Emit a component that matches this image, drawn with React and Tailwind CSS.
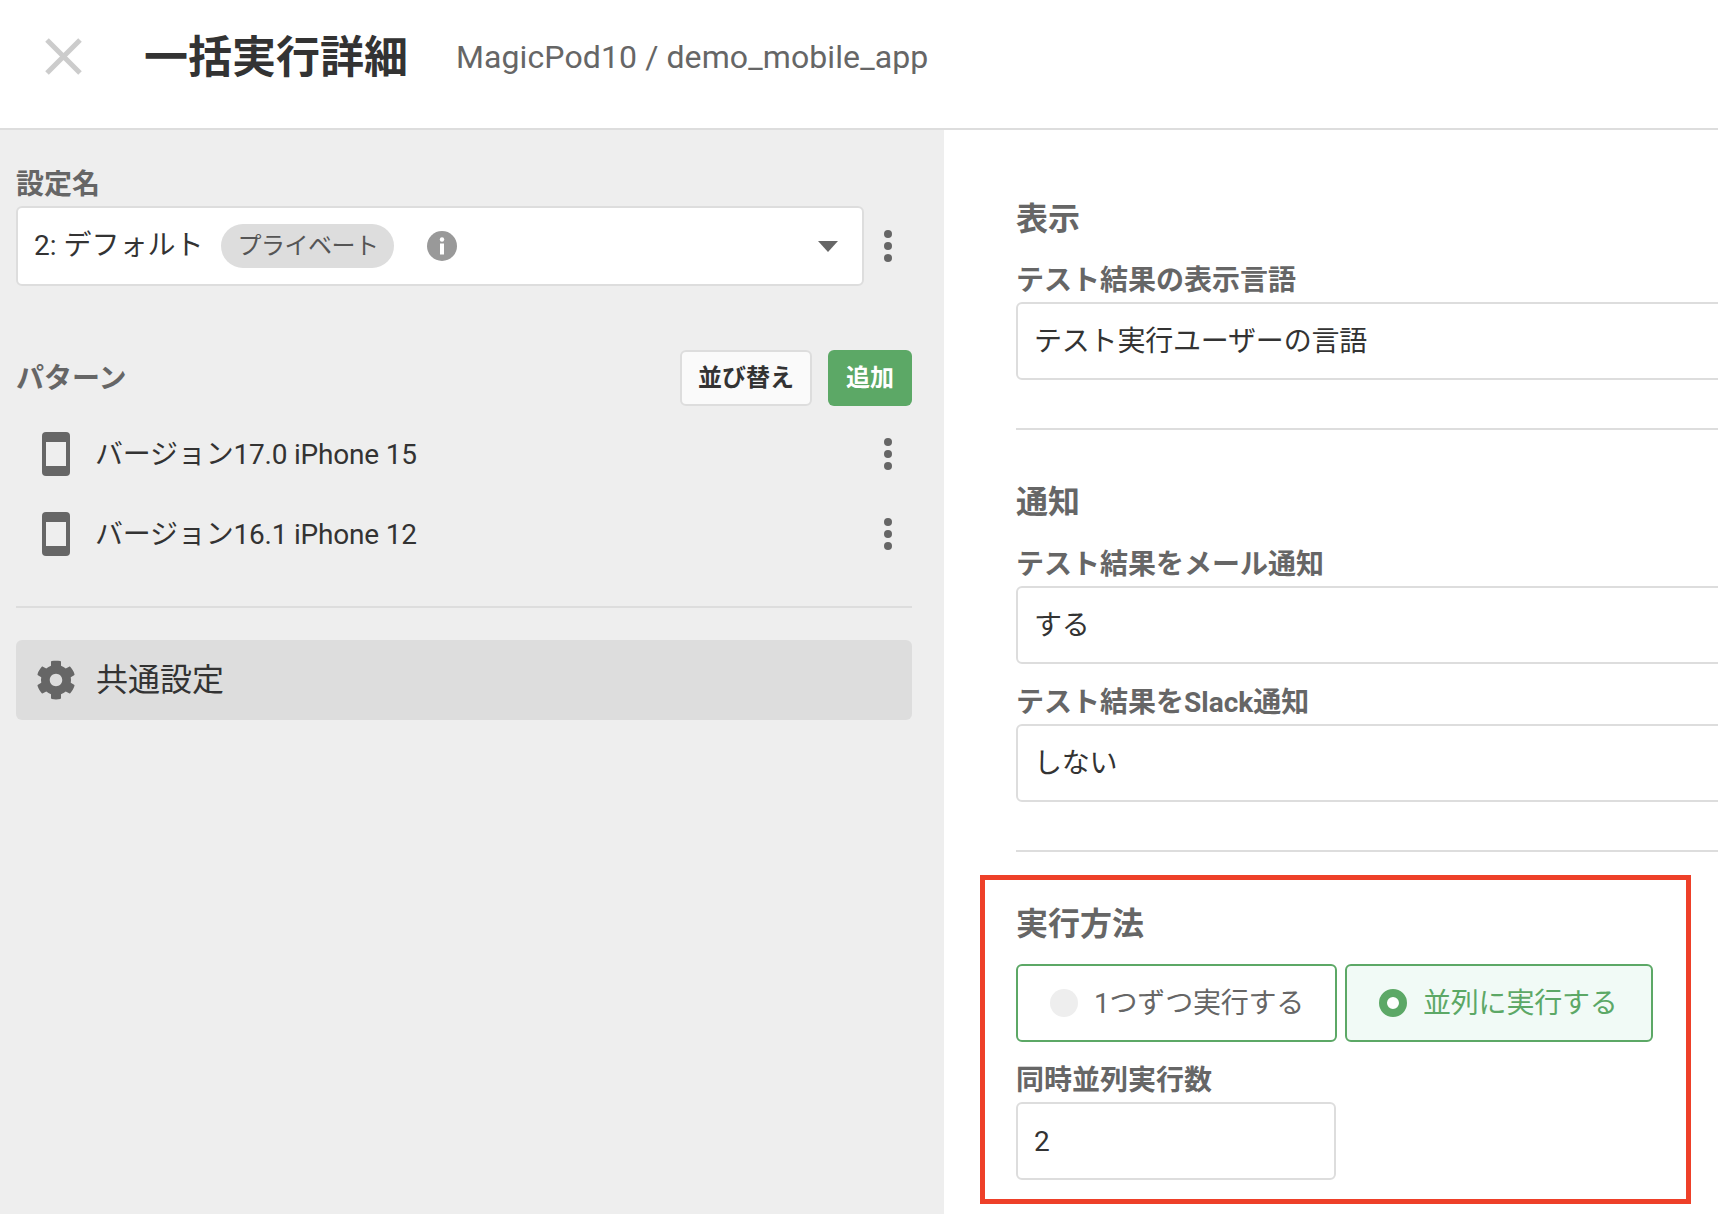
import { FaCog } from "react-icons/fa";

const font = { fontFamily: '"Roboto", "Noto Sans CJK JP", sans-serif' };

function Kebab() {
  return (
    <svg width="8" height="32" viewBox="0 0 8 32" className="shrink-0 fill-[#666]">
      <circle cx="4" cy="4" r="4" />
      <circle cx="4" cy="16" r="4" />
      <circle cx="4" cy="28" r="4" />
    </svg>
  );
}

function Phone() {
  return (
    <svg width="28" height="44" viewBox="0 0 28 44" className="shrink-0">
      <rect width="28" height="44" rx="4" fill="#666" />
      <rect x="4" y="10" width="20" height="24" fill="#eee" />
    </svg>
  );
}

function PatternRow({ label }) {
  return (
    <div className="flex items-center h-[80px] pl-[26px] pr-[20px]">
      <Phone />
      <span className="ml-[25px] pt-[2px] text-[28px] text-[#333] leading-none tracking-[-0.2px]">{label}</span>
      <div className="ml-auto flex"><Kebab /></div>
    </div>
  );
}

function Field({ label, value, className = "mt-[10px]" }) {
  return (
    <div className={className}>
      <div className="text-[28px] font-bold text-[#666] leading-[24px] h-[24px]">{label}</div>
      <div className="mt-[9px] h-[78px] w-[1000px] flex items-center px-[16px] pt-[2px] border-2 border-[#ddd] rounded-[6px] bg-white text-[28px] text-[#333] tracking-[-0.2px]">
        {value}
      </div>
    </div>
  );
}

export default function App() {
  return (
    <div style={font} className="relative w-full h-[1214px] overflow-hidden bg-white flex flex-col">
      <header className="h-[130px] shrink-0 border-b-2 border-[#ddd] flex items-center pb-[15px] pl-[45px]">
        <svg width="37" height="37" viewBox="0 0 37 37" className="stroke-[#ccc] shrink-0" strokeWidth="5">
          <path d="M2 2 L35 35 M35 2 L2 35" />
        </svg>
        <h1 className="ml-[62px] pt-[2px] text-[44px] font-bold text-[#333] leading-none">一括実行詳細</h1>
        <span className="ml-[48px] text-[32px] text-[#666] leading-none tracking-[0.1px]">MagicPod10 / demo_mobile_app</span>
      </header>

      <div className="flex flex-1 min-h-0">
        <aside className="w-[944px] shrink-0 bg-[#eee] pl-[16px] pr-[32px] pt-[41px]">
          <div className="text-[28px] font-bold text-[#666] leading-[28px]">設定名</div>
          <div className="mt-[7px] flex items-center">
            <div className="w-[848px] h-[80px] flex items-center bg-white border-2 border-[#ddd] rounded-[6px] pl-[16px] pr-[24px]">
              <span className="text-[28px] text-[#333]">2: デフォルト</span>
              <span className="ml-[18px] h-[44px] px-[16px] flex items-center rounded-full bg-[#ddd] text-[24px] text-[#555] tracking-[-0.5px]">プライベート</span>
              <svg width="30" height="30" viewBox="0 0 30 30" className="ml-[33px] mb-[1px]">
                <circle cx="15" cy="15" r="15" fill="#999" />
                <circle cx="15" cy="8.5" r="2.2" fill="#fff" />
                <rect x="13" y="12.5" width="4" height="11" fill="#fff" />
              </svg>
              <svg width="20" height="11" viewBox="0 0 20 11" className="ml-auto fill-[#666]">
                <path d="M0 0 H20 L10 11 Z" />
              </svg>
            </div>
            <div className="ml-[20px] flex"><Kebab /></div>
          </div>

          <div className="mt-[64px] flex items-center h-[56px]">
            <span className="pt-[2px] text-[28px] font-bold text-[#666]">パターン</span>
            <button className="ml-auto w-[132px] h-[56px] bg-[#fafafa] border-2 border-[#ddd] rounded-[6px] text-[24px] font-bold text-[#333]">並び替え</button>
            <button className="ml-[16px] w-[84px] h-[56px] bg-[#5ca866] rounded-[6px] text-[24px] font-bold text-white">追加</button>
          </div>

          <div className="mt-[8px]">
            <PatternRow label="バージョン17.0 iPhone 15" />
            <PatternRow label="バージョン16.1 iPhone 12" />
          </div>

          <div className="mt-[32px] h-[2px] bg-[#ddd]" />

          <div className="mt-[32px] h-[80px] flex items-center bg-[#ddd] rounded-[6px] pl-[20px]">
            <FaCog className="text-[40px] text-[#666]" />
            <span className="ml-[20px] text-[32px] text-[#333]">共通設定</span>
          </div>
        </aside>

        <main className="flex-1 min-w-0 overflow-hidden pl-[72px] pt-[73px]">
          <h2 className="text-[32px] font-bold text-[#666] leading-[32px]">表示</h2>
          <Field label="テスト結果の表示言語" value="テスト実行ユーザーの言語" className="mt-[34px]" />
          <div className="mt-[48px] w-[1000px] h-[2px] bg-[#ddd]" />

          <h2 className="mt-[56px] text-[32px] font-bold text-[#666] leading-[32px]">通知</h2>
          <Field label="テスト結果をメール通知" value="する" className="mt-[35px]" />
          <Field label="テスト結果をSlack通知" value="しない" className="mt-[27px]" />
          <div className="mt-[48px] w-[1000px] h-[2px] bg-[#ddd]" />

          <h2 className="mt-[56px] text-[32px] font-bold text-[#666] leading-[32px]">実行方法</h2>
          <div className="mt-[24px] flex gap-[8px]">
            <div className="w-[321px] h-[78px] flex items-center pl-[32px] border-2 border-[#5ca866] rounded-[6px] bg-white">
              <span className="w-[28px] h-[28px] rounded-full bg-[#eee] shrink-0" />
              <span className="ml-[16px] pt-[2px] text-[28px] text-[#666] tracking-[-0.2px]">1つずつ実行する</span>
            </div>
            <div className="w-[308px] h-[78px] flex items-center pl-[32px] border-2 border-[#5ca866] rounded-[6px] bg-[#f1faf6]">
              <span className="w-[28px] h-[28px] rounded-full border-[8px] border-[#5ca866] bg-white shrink-0" />
              <span className="ml-[16px] pt-[2px] text-[28px] text-[#5ca866] tracking-[-0.2px]">並列に実行する</span>
            </div>
          </div>
          <div className="mt-[27px] text-[28px] font-bold text-[#666] leading-[24px] h-[24px]">同時並列実行数</div>
          <div className="mt-[9px] w-[320px] h-[78px] flex items-center px-[16px] pt-[2px] border-2 border-[#ddd] rounded-[6px] bg-white text-[28px] text-[#333]">2</div>
        </main>
      </div>

      <div className="absolute left-[980px] top-[875px] w-[711px] h-[329px] border-[5px] border-[#ee4029] pointer-events-none" />
    </div>
  );
}
